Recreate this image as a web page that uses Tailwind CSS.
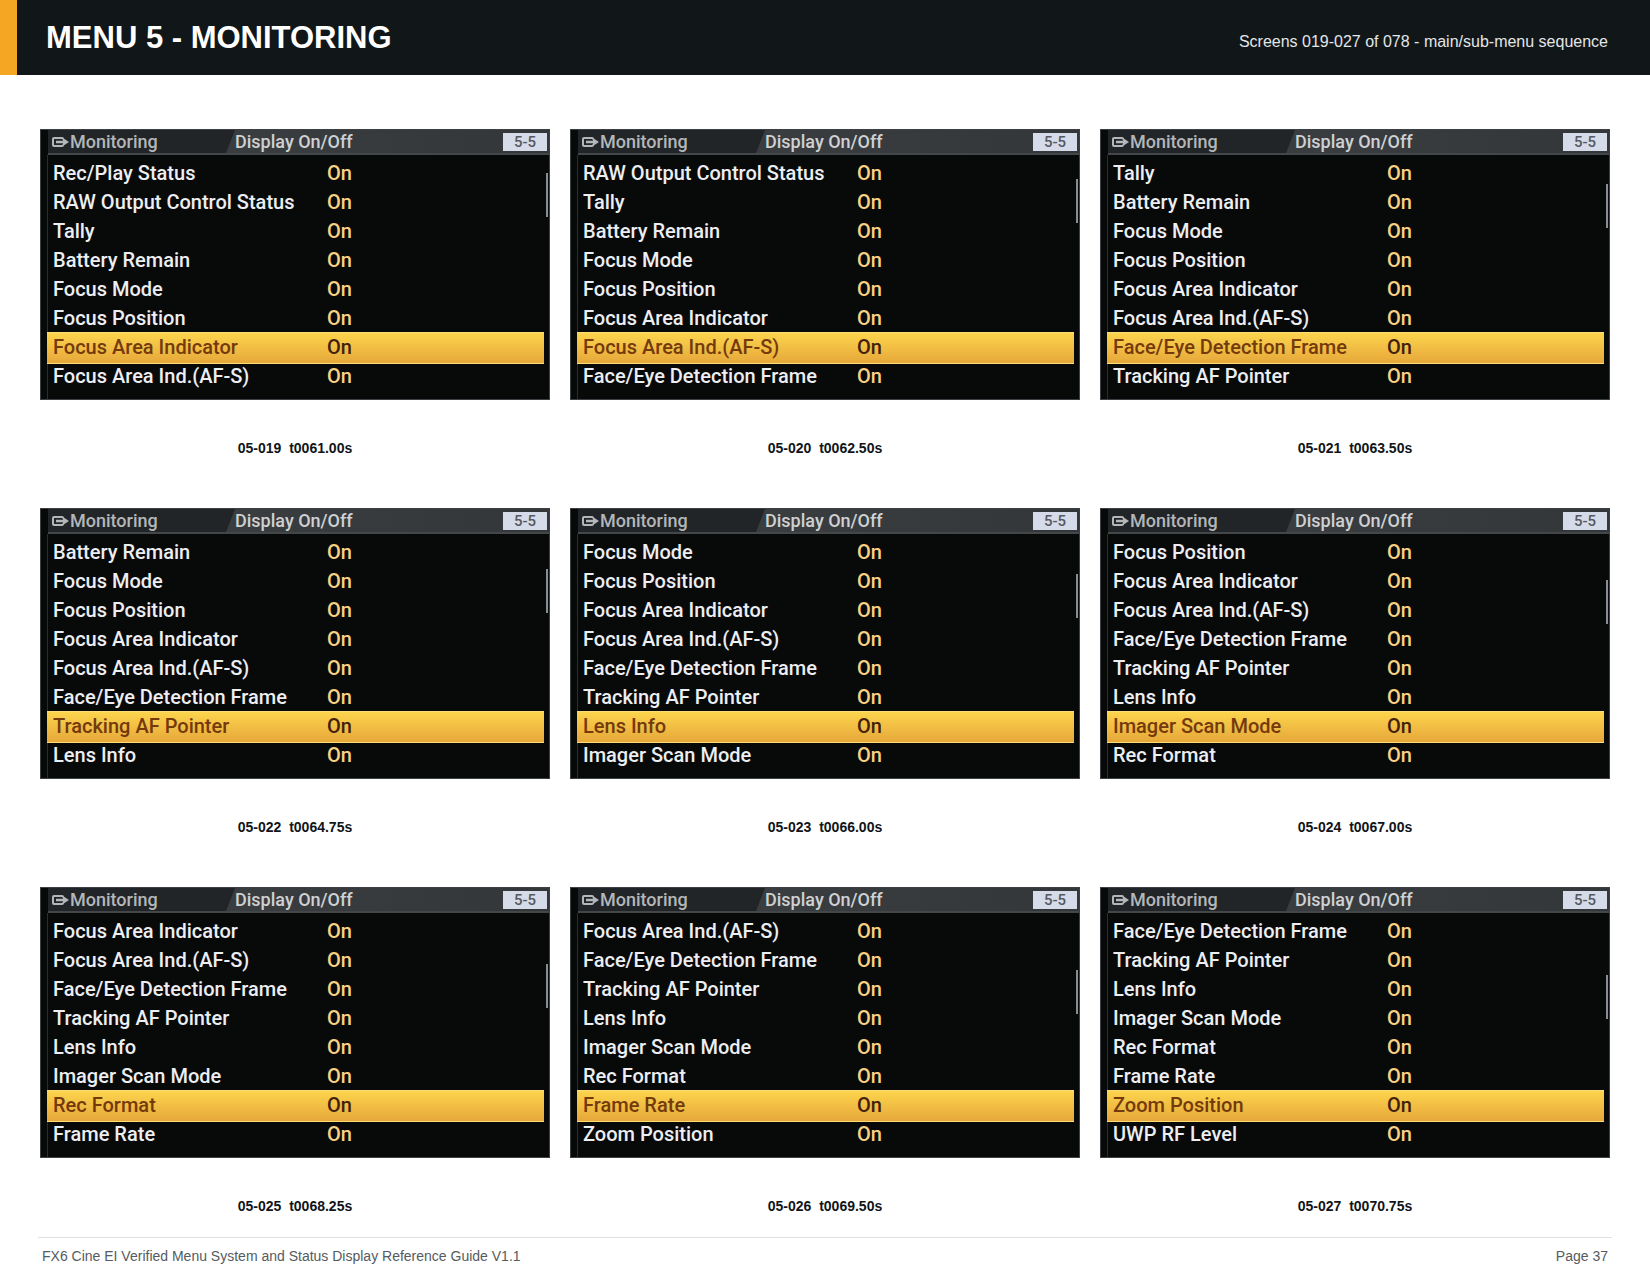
<!DOCTYPE html>
<html lang="en">
  <head>
    <meta charset="UTF-8" />
    <meta name="viewport" content="width=device-width, initial-scale=1.0" />
    <title>Menu 5 - Monitoring</title>
    <script src="https://cdn.jsdelivr.net/npm/@tailwindcss/browser@4"></script>
  </head>
  <body class="bg-white font-['Liberation_Sans',sans-serif] text-[#111518]">
    <div class="min-h-screen flex flex-col">
      <header
        class="flex items-center justify-between h-[75px] pl-[29px] pr-[42px] bg-[#111618] border-l-[17px] border-[#f5a623]"
      >
        <h1 class="text-[31px] leading-10 font-bold text-white">
          MENU 5 - MONITORING
        </h1>
        <p class="pt-2 text-base text-[#e3e6e8]">
          Screens 019-027 of 078 - main/sub-menu sequence
        </p>
      </header>

      <main
        id="screens"
        class="grid grid-cols-3 gap-x-5 gap-y-[50px] px-10 pt-[54px]"
      ></main>

      <footer
        class="flex justify-between mx-[38px] mt-[21px] pt-2 px-1 border-t border-[#dfe1e3] text-[14px] leading-5 text-[#555b60]"
      >
        <p>FX6 Cine EI Verified Menu System and Status Display Reference Guide V1.1</p>
        <p>Page 37</p>
      </footer>
    </div>

    <template id="screen">
      <figure>
        <div
          class="relative h-[271px] overflow-hidden bg-[#080909] border border-[#3c4044] font-[Roboto,sans-serif]"
        >
          <div class="flex h-[25px] ml-[7px] bg-linear-to-r from-[#3d4144] to-[#33373a] border-b-2 border-[#43474a]">
            <div
              class="flex items-center w-[187px] pl-1 bg-[#222527] text-[#b4b7ba] text-[18px] font-medium [clip-path:polygon(0_0,100%_0,178px_100%,0_100%)]"
            >
              <svg class="w-[17px] h-3 mr-px" viewBox="0 0 17 12" fill="none" stroke="currentColor" stroke-width="2">
                <path d="M11 3.500V3q0-1-1-1H2Q1 2 1 3v6q0 1 1 1h8q1 0 1-1V8.500" />
                <path d="M4 6h8" stroke-width="2.500" />
                <path d="M11 2L17 6L11 10z" fill="currentColor" stroke="none" />
              </svg>
              Monitoring
            </div>
            <div class="flex-1 flex items-center text-[#cfd1d3] text-[18px] font-medium">
              Display On/Off
            </div>
            <div
              class="w-11 h-[18px] mt-[3px] mr-[2px] bg-[#d5dbe8] text-center text-[15px] leading-[18px] font-medium text-[#55585e]"
            >
              5-5
            </div>
          </div>
          <div class="absolute top-[25px] bottom-0 left-[6px] w-px bg-[#2b2e30]"></div>
          <table class="w-full mt-1 text-[20px] leading-[29px] border-collapse">
            <tbody></tbody>
          </table>
          <div data-thumb class="absolute right-[1px] w-[2px] h-11 bg-[#8b8d94]"></div>
        </div>
        <figcaption class="mt-[38px] text-center text-[14px] leading-5 font-bold"></figcaption>
      </figure>
    </template>

    <script>
      const items = [
        "Rec/Play Status",
        "RAW Output Control Status",
        "Tally",
        "Battery Remain",
        "Focus Mode",
        "Focus Position",
        "Focus Area Indicator",
        "Focus Area Ind.(AF-S)",
        "Face/Eye Detection Frame",
        "Tracking AF Pointer",
        "Lens Info",
        "Imager Scan Mode",
        "Rec Format",
        "Frame Rate",
        "Zoom Position",
        "UWP RF Level",
      ];
      const captions = [
        "05-019\u00a0 t0061.00s",
        "05-020\u00a0 t0062.50s",
        "05-021\u00a0 t0063.50s",
        "05-022\u00a0 t0064.75s",
        "05-023\u00a0 t0066.00s",
        "05-024\u00a0 t0067.00s",
        "05-025\u00a0 t0068.25s",
        "05-026\u00a0 t0069.50s",
        "05-027\u00a0 t0070.75s",
      ];

      const row = (name) => `
        <tr>
          <th class="w-[286px] p-0 pl-3 text-left font-medium text-[#eceef2]">${name}</th>
          <td class="p-0 font-medium text-[#f8d283]">On</td>
        </tr>`;

      // the cursor always sits on the seventh line
      const activeRow = (name) => `
        <tr>
          <th class="relative w-[286px] p-0 pl-3 text-left font-medium text-[#743a0c]">
            <span class="absolute -top-[1px] left-[6px] w-[497px] h-8 bg-linear-to-b from-[#fcd44d] to-[#e6a83a] border-y border-[#fbdc78]"></span>
            <span class="relative">${name}</span>
          </th>
          <td class="relative p-0 font-medium text-[#43200c]">On</td>
        </tr>`;

      const template = document.getElementById("screen");
      captions.forEach((caption, i) => {
        const node = template.content.cloneNode(true);
        node.querySelector("tbody").innerHTML = items
          .slice(i, i + 8)
          .map((name, n) => (n === 6 ? activeRow(name) : row(name)))
          .join("");
        node.querySelector("[data-thumb]").style.top = 43 + Math.round(i * 5.5) + "px";
        node.querySelector("figcaption").textContent = caption;
        document.getElementById("screens").appendChild(node);
      });
    </script>
  </body>
</html>
